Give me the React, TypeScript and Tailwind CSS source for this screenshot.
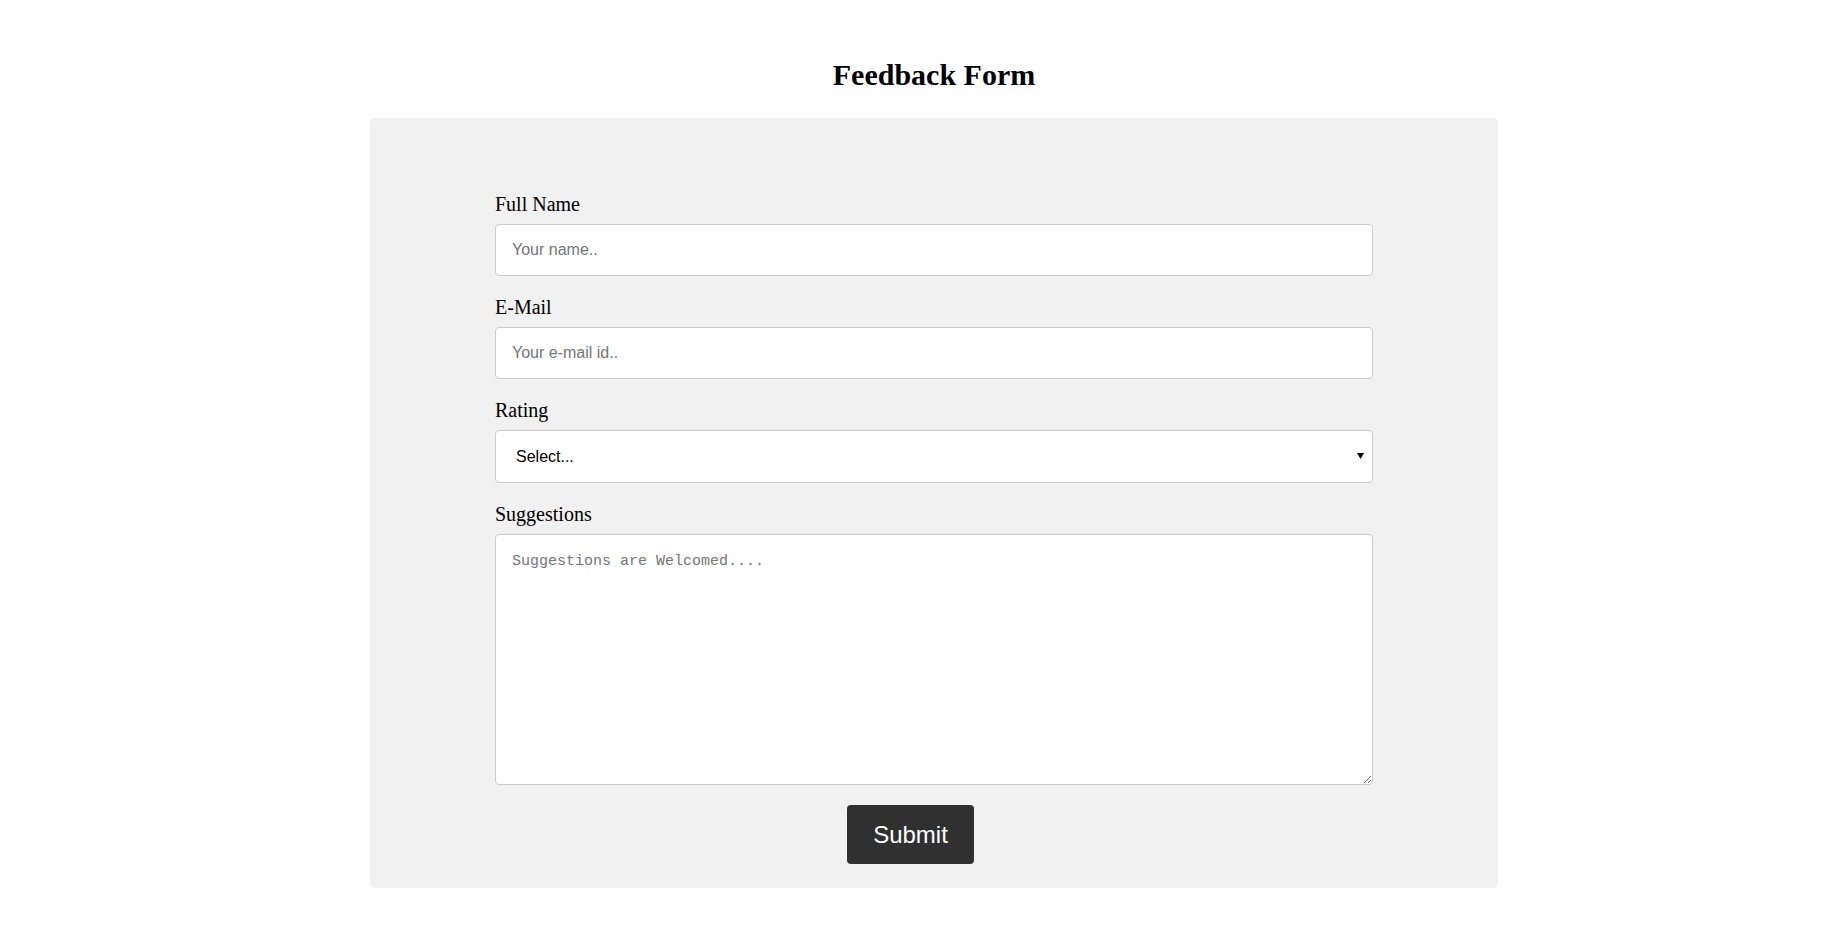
const serif = { fontFamily: '"Liberation Serif", "Times New Roman", serif' };

const FeedbackForm = () => {
    return (
        <div className="min-h-screen w-full bg-white">
            <div className="ml-[370px] w-[1128px] pt-[58px]">
                <h1
                    style={serif}
                    className="text-center text-[30px] leading-[34px] font-bold text-black"
                >
                    Feedback Form
                </h1>
                <form
                    onSubmit={(e) => e.preventDefault()}
                    className="mt-[26px] rounded-[5px] bg-[#f1f1f1] px-[125px] pt-[75px] pb-[24px]"
                >
                    <label
                        htmlFor="fname"
                        style={serif}
                        className="mb-2 block text-[20px] leading-[23px] text-black"
                    >
                        Full Name
                    </label>
                    <input
                        id="fname"
                        type="text"
                        placeholder="Your name.."
                        className="mb-5 block h-[52px] w-full rounded-[4px] border border-[#ccc] bg-white px-4 font-['Liberation_Sans',Arial,sans-serif] text-[16px] text-black outline-none placeholder:text-[#757575]"
                    />

                    <label
                        htmlFor="email"
                        style={serif}
                        className="mb-2 block text-[20px] leading-[23px] text-black"
                    >
                        E-Mail
                    </label>
                    <input
                        id="email"
                        type="email"
                        placeholder="Your e-mail id.."
                        className="mb-5 block h-[52px] w-full rounded-[4px] border border-[#ccc] bg-white px-4 font-['Liberation_Sans',Arial,sans-serif] text-[16px] text-black outline-none placeholder:text-[#757575]"
                    />

                    <label
                        htmlFor="rating"
                        style={serif}
                        className="mb-2 block text-[20px] leading-[23px] text-black"
                    >
                        Rating
                    </label>
                    <div className="relative mb-5">
                        <select
                            id="rating"
                            defaultValue=""
                            className="block h-[53px] w-full appearance-none rounded-[4px] border border-[#ccc] bg-white pl-5 pr-8 font-['Liberation_Sans',Arial,sans-serif] text-[16px] text-black outline-none"
                        >
                            <option value="">Select...</option>
                            <option value="5">Excellent</option>
                            <option value="4">Good</option>
                            <option value="3">Average</option>
                            <option value="2">Poor</option>
                        </select>
                        <svg
                            width="7"
                            height="6"
                            viewBox="0 0 7 6"
                            className="pointer-events-none absolute top-[23px] right-[9px]"
                        >
                            <polygon points="0,0 7,0 3.5,6" fill="#000" />
                        </svg>
                    </div>

                    <label
                        htmlFor="suggestions"
                        style={serif}
                        className="mb-2 block text-[20px] leading-[23px] text-black"
                    >
                        Suggestions
                    </label>
                    <textarea
                        id="suggestions"
                        placeholder="Suggestions are Welcomed...."
                        className="mb-5 block h-[251px] w-full rounded-[4px] border border-[#ccc] bg-white p-4 font-['Liberation_Mono',monospace] text-[15px] text-black outline-none placeholder:text-[#757575]"
                    />

                    <button
                        type="submit"
                        className="ml-[352px] block h-[59px] w-[127px] rounded-[4px] bg-[#303030] font-['Liberation_Sans',Arial,sans-serif] text-[24px] text-white"
                    >
                        Submit
                    </button>
                </form>
            </div>
        </div>
    );
};

export default function App() {
    return <FeedbackForm />;
}
